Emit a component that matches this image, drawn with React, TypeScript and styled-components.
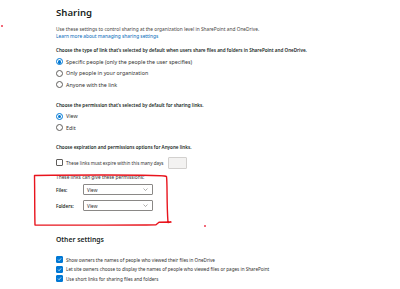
import React from 'react'
import styled, { createGlobalStyle } from 'styled-components'

const GlobalStyle = createGlobalStyle`
  html, body {
    margin: 0;
    padding: 0;
    background: #ffffff;
  }
  body {
    font-family: "Noto Sans", "Open Sans", sans-serif;
    color: #323130;
  }
`

const Page = styled.div`
  position: relative;
  width: 400px;
  height: 289px;
  overflow: hidden;
  box-sizing: border-box;
  padding: 3px 0 0 56px;
`

const Title = styled.h1`
  margin: 0 0 2.5px;
  font-size: 9.6px;
  line-height: 20px;
  font-weight: 600;
  color: #201f1e;
`

const Text = styled.div<{ $muted?: boolean }>`
  font-size: 4.8px;
  line-height: 7px;
  white-space: nowrap;
  color: ${p => (p.$muted ? '#484644' : '#323130')};
`

const Link = styled.a`
  display: block;
  font-size: 4.8px;
  line-height: 7px;
  color: #0067b8;
  text-decoration: none;
  white-space: nowrap;
`

const Heading = styled.div<{ $top: number }>`
  margin-top: ${p => p.$top}px;
  font-size: 4.6px;
  line-height: 8px;
  font-weight: 600;
  color: #201f1e;
  white-space: nowrap;
`

const Group = styled.div<{ $top: number }>`
  margin-top: ${p => p.$top}px;
  display: flex;
  flex-direction: column;
`

const OptionRow = styled.label<{ $h: number; $size?: number }>`
  display: flex;
  align-items: center;
  gap: 3px;
  height: ${p => p.$h}px;
  font-size: ${p => p.$size ?? 5}px;
  white-space: nowrap;
  color: #323130;
`

const Radio = styled.span<{ $on?: boolean }>`
  box-sizing: border-box;
  width: 7px;
  height: 7px;
  border-radius: 50%;
  border: 1px solid ${p => (p.$on ? '#0078d4' : '#605e5c')};
  flex: none;
  display: grid;
  place-items: center;

  &::after {
    content: '';
    width: 3.5px;
    height: 3.5px;
    border-radius: 50%;
    background: ${p => (p.$on ? '#0078d4' : 'transparent')};
  }
`

const Box = styled.span<{ $on?: boolean }>`
  box-sizing: border-box;
  width: 7px;
  height: 7px;
  border-radius: 1px;
  border: 1px solid ${p => (p.$on ? '#0078d4' : '#605e5c')};
  background: ${p => (p.$on ? '#0078d4' : '#ffffff')};
  flex: none;
  display: grid;
  place-items: center;

  svg {
    display: block;
  }
`

const DaysInput = styled.span`
  box-sizing: border-box;
  width: 19px;
  height: 12px;
  margin-left: 1px;
  background: #f3f2f1;
  border: 1px solid #d2d0ce;
  border-radius: 1px;
`

const Permissions = styled.div`
  position: relative;
  margin-top: 5.5px;
`

const FieldRow = styled.div`
  display: grid;
  grid-template-columns: 27px 70px;
  align-items: center;
  height: 15px;
  margin-top: 1px;
`

const FieldLabel = styled.span`
  font-size: 4.6px;
  font-weight: 600;
  color: #201f1e;
`

const Select = styled.div`
  box-sizing: border-box;
  height: 11px;
  border: 1px solid #8a8886;
  border-radius: 1px;
  background: #ffffff;
  display: flex;
  align-items: center;
  justify-content: space-between;
  padding: 0 4px 0 3px;
  font-size: 4.8px;
  color: #323130;
`

const Annotation = styled.svg`
  position: absolute;
  left: -24px;
  top: -2px;
  pointer-events: none;
`

const SubTitle = styled.h2`
  margin: 20.5px 0 0;
  font-size: 6.8px;
  line-height: 12px;
  font-weight: 600;
  color: #201f1e;
`

const Dot = styled.span<{ $x: number; $y: number }>`
  position: absolute;
  left: ${p => p.$x}px;
  top: ${p => p.$y}px;
  width: 2px;
  height: 2px;
  background: #f26a7a;
`

const Check = () => (
  <Box $on>
    <svg width="5" height="5" viewBox="0 0 10 10">
      <path d="M2 5.2 L4.2 7.4 L8.2 2.8" fill="none" stroke="#fff" strokeWidth="1.4" />
    </svg>
  </Box>
)

const Chevron = () => (
  <svg width="5" height="3" viewBox="0 0 10 6">
    <path d="M1 1 L5 5 L9 1" fill="none" stroke="#605e5c" strokeWidth="1" />
  </svg>
)

export default function App() {
  return (
    <>
      <GlobalStyle />
      <Page>
        <Dot $x={1} $y={25} />
        <Dot $x={204} $y={225} />

        <Title>Sharing</Title>
        <Text $muted>Use these settings to control sharing at the organization level in SharePoint and OneDrive.</Text>
        <Link href="#">Learn more about managing sharing settings</Link>

        <Heading $top={6}>
          Choose the type of link that's selected by default when users share files and folders in SharePoint and OneDrive.
        </Heading>
        <Group $top={2.5}>
          <OptionRow $h={11.5} $size={5.35}><Radio $on />Specific people (only the people the user specifies)</OptionRow>
          <OptionRow $h={11.5} $size={5.35}><Radio />Only people in your organization</OptionRow>
          <OptionRow $h={11.5} $size={5.35}><Radio />Anyone with the link</OptionRow>
        </Group>

        <Heading $top={10}>Choose the permission that's selected by default for sharing links.</Heading>
        <Group $top={2}>
          <OptionRow $h={11.5} $size={5.35}><Radio $on />View</OptionRow>
          <OptionRow $h={11.5} $size={5.35}><Radio />Edit</OptionRow>
        </Group>

        <Heading $top={9}>Choose expiration and permissions options for Anyone links.</Heading>
        <Group $top={6}>
          <OptionRow $h={12} $size={4.55}><Box />These links must expire within this many days<DaysInput /></OptionRow>
        </Group>

        <Permissions>
          <Text>These links can give these permissions:</Text>
          <FieldRow>
            <FieldLabel>Files:</FieldLabel>
            <Select>View<Chevron /></Select>
          </FieldRow>
          <FieldRow>
            <FieldLabel>Folders:</FieldLabel>
            <Select>View<Chevron /></Select>
          </FieldRow>
          <Annotation width="145" height="56" viewBox="0 0 145 56">
            <path
              d="M2.5 3.5 C40 3 90 3 110 3.2 C125 3.3 133 3.5 134.5 4.5 C135.5 12 134.5 30 136 50.5 L139 50 L127 50.3 L124 52.8 C90 53.5 40 53 3 53 C2.6 40 2.8 20 2.5 3.5 Z"
              fill="none"
              stroke="#e8141d"
              strokeWidth="1.4"
              strokeLinejoin="round"
            />
          </Annotation>
        </Permissions>

        <SubTitle>Other settings</SubTitle>
        <Group $top={9.25}>
          <OptionRow $h={9.5} $size={4.6}><Check />Show owners the names of people who viewed their files in OneDrive</OptionRow>
          <OptionRow $h={9.5} $size={4.6}><Check />Let site owners choose to display the names of people who viewed files or pages in SharePoint</OptionRow>
          <OptionRow $h={9.5} $size={4.6}><Check />Use short links for sharing files and folders</OptionRow>
        </Group>
      </Page>
    </>
  )
}
